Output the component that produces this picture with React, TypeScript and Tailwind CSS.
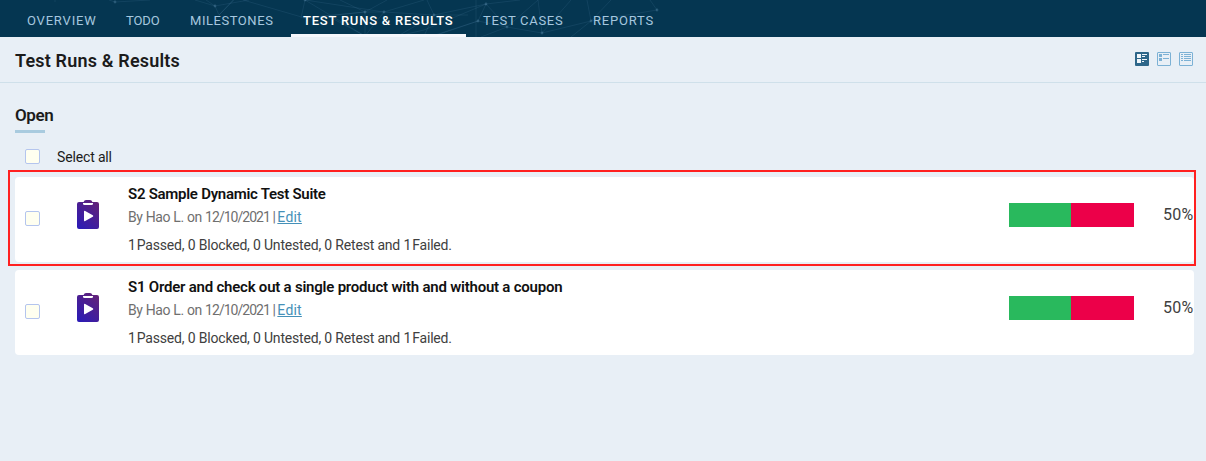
import React from "react";

const tabs = [
  { label: "OVERVIEW", width: "w-[94px]", tracking: "tracking-[0.8px]" },
  { label: "TODO", width: "w-[59px]", tracking: "tracking-[-0.1px]" },
  { label: "MILESTONES", width: "w-[108px]", tracking: "tracking-[0.55px]" },
  { label: "TEST RUNS & RESULTS", width: "w-[175px]", tracking: "tracking-[0.78px]", active: true },
  { label: "TEST CASES", width: "w-[105px]", tracking: "tracking-[0.7px]" },
  { label: "REPORTS", width: "w-[86px]", tracking: "tracking-[0.78px]" },
];

const runs = [
  {
    title: "S2 Sample Dynamic Test Suite",
    tracking: "tracking-[-0.27px]",
    highlighted: true,
  },
  {
    title: "S1 Order and check out a single product with and without a coupon",
    tracking: "tracking-[-0.22px]",
    highlighted: false,
  },
];

const dots = [
  [115, 2], [215, 6], [305, 0], [365, 12], [384, 12], [434, 15], [486, 4],
  [478, 21], [507, 27], [542, 33], [591, 21], [657, 10],
];

function Network() {
  return (
    <svg className="pointer-events-none absolute left-0 top-0" width="700" height="37" viewBox="0 0 700 37" aria-hidden="true">
      <g stroke="#6fa3c4" strokeOpacity="0.16" strokeWidth="0.8" fill="none">
        <path d="M55 0v2M115 2l35-2M115 2l-6-2M215 6l-20-6M215 6l4 9 14-15M215 6l34-6M215 6l-9-6M219 15l15-15M243 0l62 18 60-6M305 0l-4 18M305 0l60 36M305 0l79 12M305 0l46-2M365 12l19 0M365 12v24M365 12l-62 6M384 12l-19 24M384 12l40-12M365 36l-37-20M340 0l25 12 22-12" />
        <path d="M427 0l7 15-36 21M434 15l-50-3M434 15l34 0M434 15l-10 21M486 4l-52 11M486 4l-62 26-26 6M486 4l-8 17-44 15M486 4l21 23M486 4l34-4M476 0v37M478 21l-46 15M478 21l29 6 35 6M507 27l-26 10M507 27l31-27M542 33l-4-33M542 33l49-12M542 33l29-33M591 21l-4-21M591 21l20-21M591 21l-20 16M591 21l66-11M657 10l-7-10" />
      </g>
      <g fill="#6fa3c4" fillOpacity="0.3">
        {dots.map(([x, y]) => (
          <circle key={`${x}-${y}`} cx={x} cy={y} r="1.4" />
        ))}
      </g>
    </svg>
  );
}

function ClipboardIcon() {
  return (
    <svg width="22" height="29" viewBox="0 0 22 29" aria-hidden="true">
      <defs>
        <linearGradient id="clip" x1="0.15" y1="1" x2="0.85" y2="0">
          <stop offset="0" stopColor="#2c1bb5" />
          <stop offset="1" stopColor="#632277" />
        </linearGradient>
      </defs>
      <path fill="url(#clip)" d="M2 2H6.600Q7.200 0 9 0h4q1.800 0 2.400 2H20Q22 2 22 4v23Q22 29 20 29H2Q0 29 0 27V4Q0 2 2 2z" />
      <path fill="#fff" d="M6 3h10v.7Q16 5 14.500 5h-7Q6 5 6 3.700zM7 11.800q0-1.400 1.200-.7l7.600 4.200q1.100.7 0 1.400l-7.600 4.200q-1.200.7-1.200-.7z" />
    </svg>
  );
}

function LargeViewIcon() {
  return (
    <svg width="14" height="14" viewBox="0 0 14 14" aria-hidden="true">
      <rect width="14" height="14" rx="1" fill="#2d6689" />
      <path fill="#f1f6fa" d="M2 2h4v4H2zM2 7h4v4H2zM7 2h5v1H7zM7 4h3v1H7zM7 7h5v1H7zM7 9h2v1H7z" />
    </svg>
  );
}

function MediumViewIcon() {
  return (
    <svg width="14" height="14" viewBox="0 0 14 14" aria-hidden="true">
      <rect x=".5" y=".5" width="13" height="13" rx=".5" fill="none" stroke="#7cb1d5" />
      <path fill="#7cb1d5" d="M2 2h3v3H2zM2 6h3v3H2zM6 2h6v1H6zM6 6h6v1H6z" />
    </svg>
  );
}

function CompactViewIcon() {
  return (
    <svg width="14" height="14" viewBox="0 0 14 14" aria-hidden="true">
      <rect x=".5" y=".5" width="13" height="13" rx=".5" fill="none" stroke="#7cb1d5" />
      <path fill="#7cb1d5" d="M2 2h2v1H2zM2 4h2v1H2zM2 6h2v1H2zM2 8h2v1H2zM5 2h7v1H5zM5 4h7v1H5zM5 6h7v1H5zM5 8h7v1H5z" />
    </svg>
  );
}

function Checkbox({ label }: { label: string }) {
  return (
    <input
      type="checkbox"
      aria-label={label}
      className="-mt-0.5 block size-[15px] shrink-0 appearance-none rounded-[2px] border border-[#b4c5ee] bg-[#fffff0]"
    />
  );
}

function RunCard({ run }: { run: (typeof runs)[number] }) {
  return (
    <article className="relative flex h-[85px] rounded bg-white pl-2.5">
      <div className="flex w-[52px] items-center">
        <Checkbox label={run.title} />
      </div>
      <div className="w-[51px] pt-[23px]">
        <ClipboardIcon />
      </div>
      <div className="flex-1 whitespace-nowrap pt-[7px] text-sm">
        <h3 className={`h-5 text-[15px] font-semibold leading-5 text-[#111] ${run.tracking}`}>{run.title}</h3>
        <p className="mt-[3px] h-5 leading-5 tracking-[-0.36px] text-[#6f6f6f]">
          By Hao L. on <span className="tracking-[-0.97px]">12/10/2021 | </span>
          <a href="#edit" className="tracking-[0.2px] text-[#4590b8] underline">Edit</a>
        </p>
        <p className="mt-2 h-5 leading-5 tracking-[-0.18px] text-[#404040]">
          <span className="tracking-[-1.3px]">1 </span>Passed, 0 Blocked, 0 Untested, 0 Retest and{" "}
          <span className="tracking-[-1.3px]">1 </span>Failed.
        </p>
      </div>
      <div className="mt-[26px] flex h-6 w-[125px]">
        <div className="w-[62px] bg-[#29b95d]" />
        <div className="flex-1 bg-[#ec0049]" />
      </div>
      <div className="w-[60px] whitespace-nowrap pl-[29px] pt-[26px] text-base leading-6 tracking-[0.2px] text-[#404040]">50%</div>
      {run.highlighted && (
        <div className="pointer-events-none absolute -bottom-1 -left-[7px] -right-0.5 -top-[7px] border-2 border-[#ff2020]" />
      )}
    </article>
  );
}

export default function App() {
  return (
    <div className="h-[461px] overflow-hidden bg-[#e8eff6] font-[Roboto,sans-serif] text-[#1b1b1b]">
      <header className="relative h-[37px] bg-[#053651]">
        <Network />
        <nav className="relative flex h-full gap-[5px] pl-[15px]">
          {tabs.map((tab) => (
            <a
              key={tab.label}
              href="#tab"
              className={`h-full whitespace-nowrap border-b-[3px] pl-3 pt-[11px] text-[13px] leading-5 ${tab.width} ${tab.tracking} ${
                tab.active ? "border-[#f5f7fc] font-medium text-white" : "border-transparent text-[#a5c7df]"
              }`}
            >
              {tab.label}
            </a>
          ))}
        </nav>
      </header>
      <div className="flex h-[46px] items-center justify-between border-b border-[#cfe0ea] pl-[15px] pr-[13px]">
        <h1 className="pt-0.5 text-[18px] font-semibold leading-6 tracking-[0.18px]">Test Runs &amp; Results</h1>
        <div className="-mt-0.5 flex gap-2">
          <LargeViewIcon />
          <MediumViewIcon />
          <CompactViewIcon />
        </div>
      </div>
      <main className="pl-[15px] pr-3 pt-5">
        <h2 className="h-[27px] text-[17px] font-semibold leading-6 tracking-[-0.4px]">Open</h2>
        <div className="h-[3px] w-[30px] bg-[#a9cbdf]" />
        <div className="mt-[13px] flex h-[22px] items-center pl-2.5">
          <Checkbox label="Select all" />
          <span className="ml-[17px] text-sm leading-[22px] tracking-[-0.15px]">Select all</span>
        </div>
        <section className="mt-[9px] flex flex-col gap-2">
          {runs.map((run) => (
            <RunCard key={run.title} run={run} />
          ))}
        </section>
      </main>
    </div>
  );
}
